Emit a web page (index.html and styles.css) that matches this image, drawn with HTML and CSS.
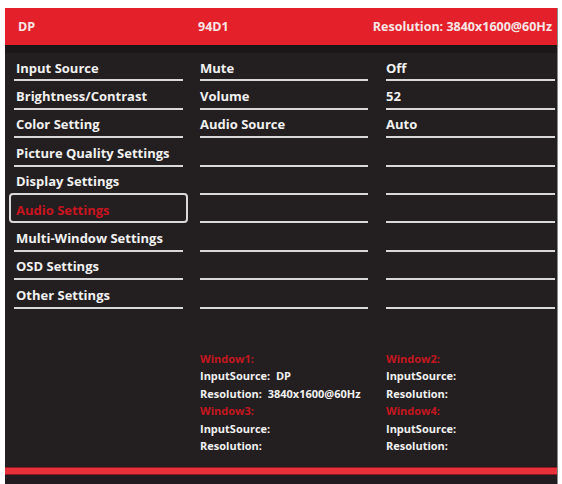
FILE: index.html
```html
<!DOCTYPE html>
<html lang="en">
<head>
<meta charset="utf-8">
<title>OSD Menu - Audio Settings</title>
<link rel="stylesheet" href="styles.css">
</head>
<body>
<div class="panel">
  <header class="header cols">
    <div class="col-left"><span class="h-dp">DP</span></div>
    <div class="col-mid"><span class="h-model">94D1</span></div>
    <div class="col-right h-res">Resolution: 3840x1600@60Hz</div>
  </header>
  <div class="band"></div>
  <main class="menu cols">
    <ul class="list col-left">
      <li class="row left">Input Source</li>
      <li class="row left">Brightness/Contrast</li>
      <li class="row left">Color Setting</li>
      <li class="row left">Picture Quality Settings</li>
      <li class="row left pre-sel">Display Settings</li>
      <li class="row left selected">Audio Settings</li>
      <li class="row left">Multi-Window Settings</li>
      <li class="row left">OSD Settings</li>
      <li class="row left">Other Settings</li>
    </ul>
    <ul class="list col-mid">
      <li class="row">Mute</li>
      <li class="row">Volume</li>
      <li class="row">Audio Source</li>
      <li class="row"></li>
      <li class="row"></li>
      <li class="row"></li>
      <li class="row"></li>
      <li class="row"></li>
      <li class="row"></li>
    </ul>
    <ul class="list col-right">
      <li class="row">Off</li>
      <li class="row">52</li>
      <li class="row">Auto</li>
      <li class="row"></li>
      <li class="row"></li>
      <li class="row"></li>
      <li class="row"></li>
      <li class="row"></li>
      <li class="row"></li>
    </ul>
  </main>
  <section class="info cols">
    <div class="col-left"></div>
    <div class="col-mid info-col">
      <div class="win">Window1:</div>
      <div>InputSource:&nbsp; DP</div>
      <div>Resolution:&nbsp; 3840x1600@60Hz</div>
      <div class="win">Window3:</div>
      <div>InputSource:</div>
      <div>Resolution:</div>
    </div>
    <div class="col-right info-col">
      <div class="win">Window2:</div>
      <div>InputSource:</div>
      <div>Resolution:</div>
      <div class="win">Window4:</div>
      <div>InputSource:</div>
      <div>Resolution:</div>
    </div>
  </section>
  <div class="spacer"></div>
  <div class="stripe"></div>
  <div class="foot"></div>
</div>
</body>
</html>
```

FILE: styles.css
```css
* { box-sizing: border-box; }

html, body {
  margin: 0;
  padding: 0;
  background: #ffffff;
}

body {
  font-family: "Open Sans", "Liberation Sans", sans-serif;
  font-weight: 700;
  color: #f1f1f1;
}

.panel {
  margin: 8px 0 0 5px;
  width: 553px;
  height: 476px;
  background: #231f20;
  display: flex;
  flex-direction: column;
  overflow: hidden;
  border-right: 1px solid #8a8a8a;
}

.list {
  list-style: none;
  margin: 0;
  padding: 0;
}

.cols {
  display: flex;
  padding-left: 4px;
}

.cols .col-left { width: 179px; flex: none; margin-left: 0; }
.cols .col-mid { width: 168px; margin-left: 12px; flex: none; }
.cols .col-right { width: 169px; margin-left: 18px; flex: none; }

/* header */
.header {
  height: 37px;
  background: #e4212a;
  align-items: center;
  font-size: 12.5px;
  color: #f6e6e6;
}
.h-dp { padding-left: 9px; }
.h-model { margin-left: -2px; }
.cols .h-res {
  text-align: right;
  padding-right: 3px;
  width: 190px;
  margin-left: -3px;
  white-space: nowrap;
}

.band {
  height: 8px;
  background: #1c1819;
}

/* menu rows */
.row {
  height: 28.4px;
  border-bottom: 2px solid #d9d9d9;
  display: flex;
  align-items: center;
  padding-top: 3px;
  font-size: 13px;
  white-space: nowrap;
}

.row.left {
  margin: 0 5px;
  padding-left: 2px;
}

.row.pre-sel {
  border-bottom-color: transparent;
}

.row.selected {
  margin: -2px 0 0;
  height: 30.4px;
  border: 2px solid #d9d9d9;
  border-radius: 4px;
  padding-left: 5px;
  padding-top: 4px;
  color: #c8141f;
}

/* window info */
.info {
  margin-top: 41px;
}

.info-col {
  font-size: 11px;
  line-height: 17.6px;
  white-space: nowrap;
}

.win {
  color: #c5161f;
}

.spacer { flex: 1; }

.stripe {
  height: 8px;
  background: #e8313a;
  border-top: 1px solid #8e1a1f;
  border-bottom: 1px solid #8e1a1f;
}

.foot {
  height: 9px;
  background: #221c20;
}
```
